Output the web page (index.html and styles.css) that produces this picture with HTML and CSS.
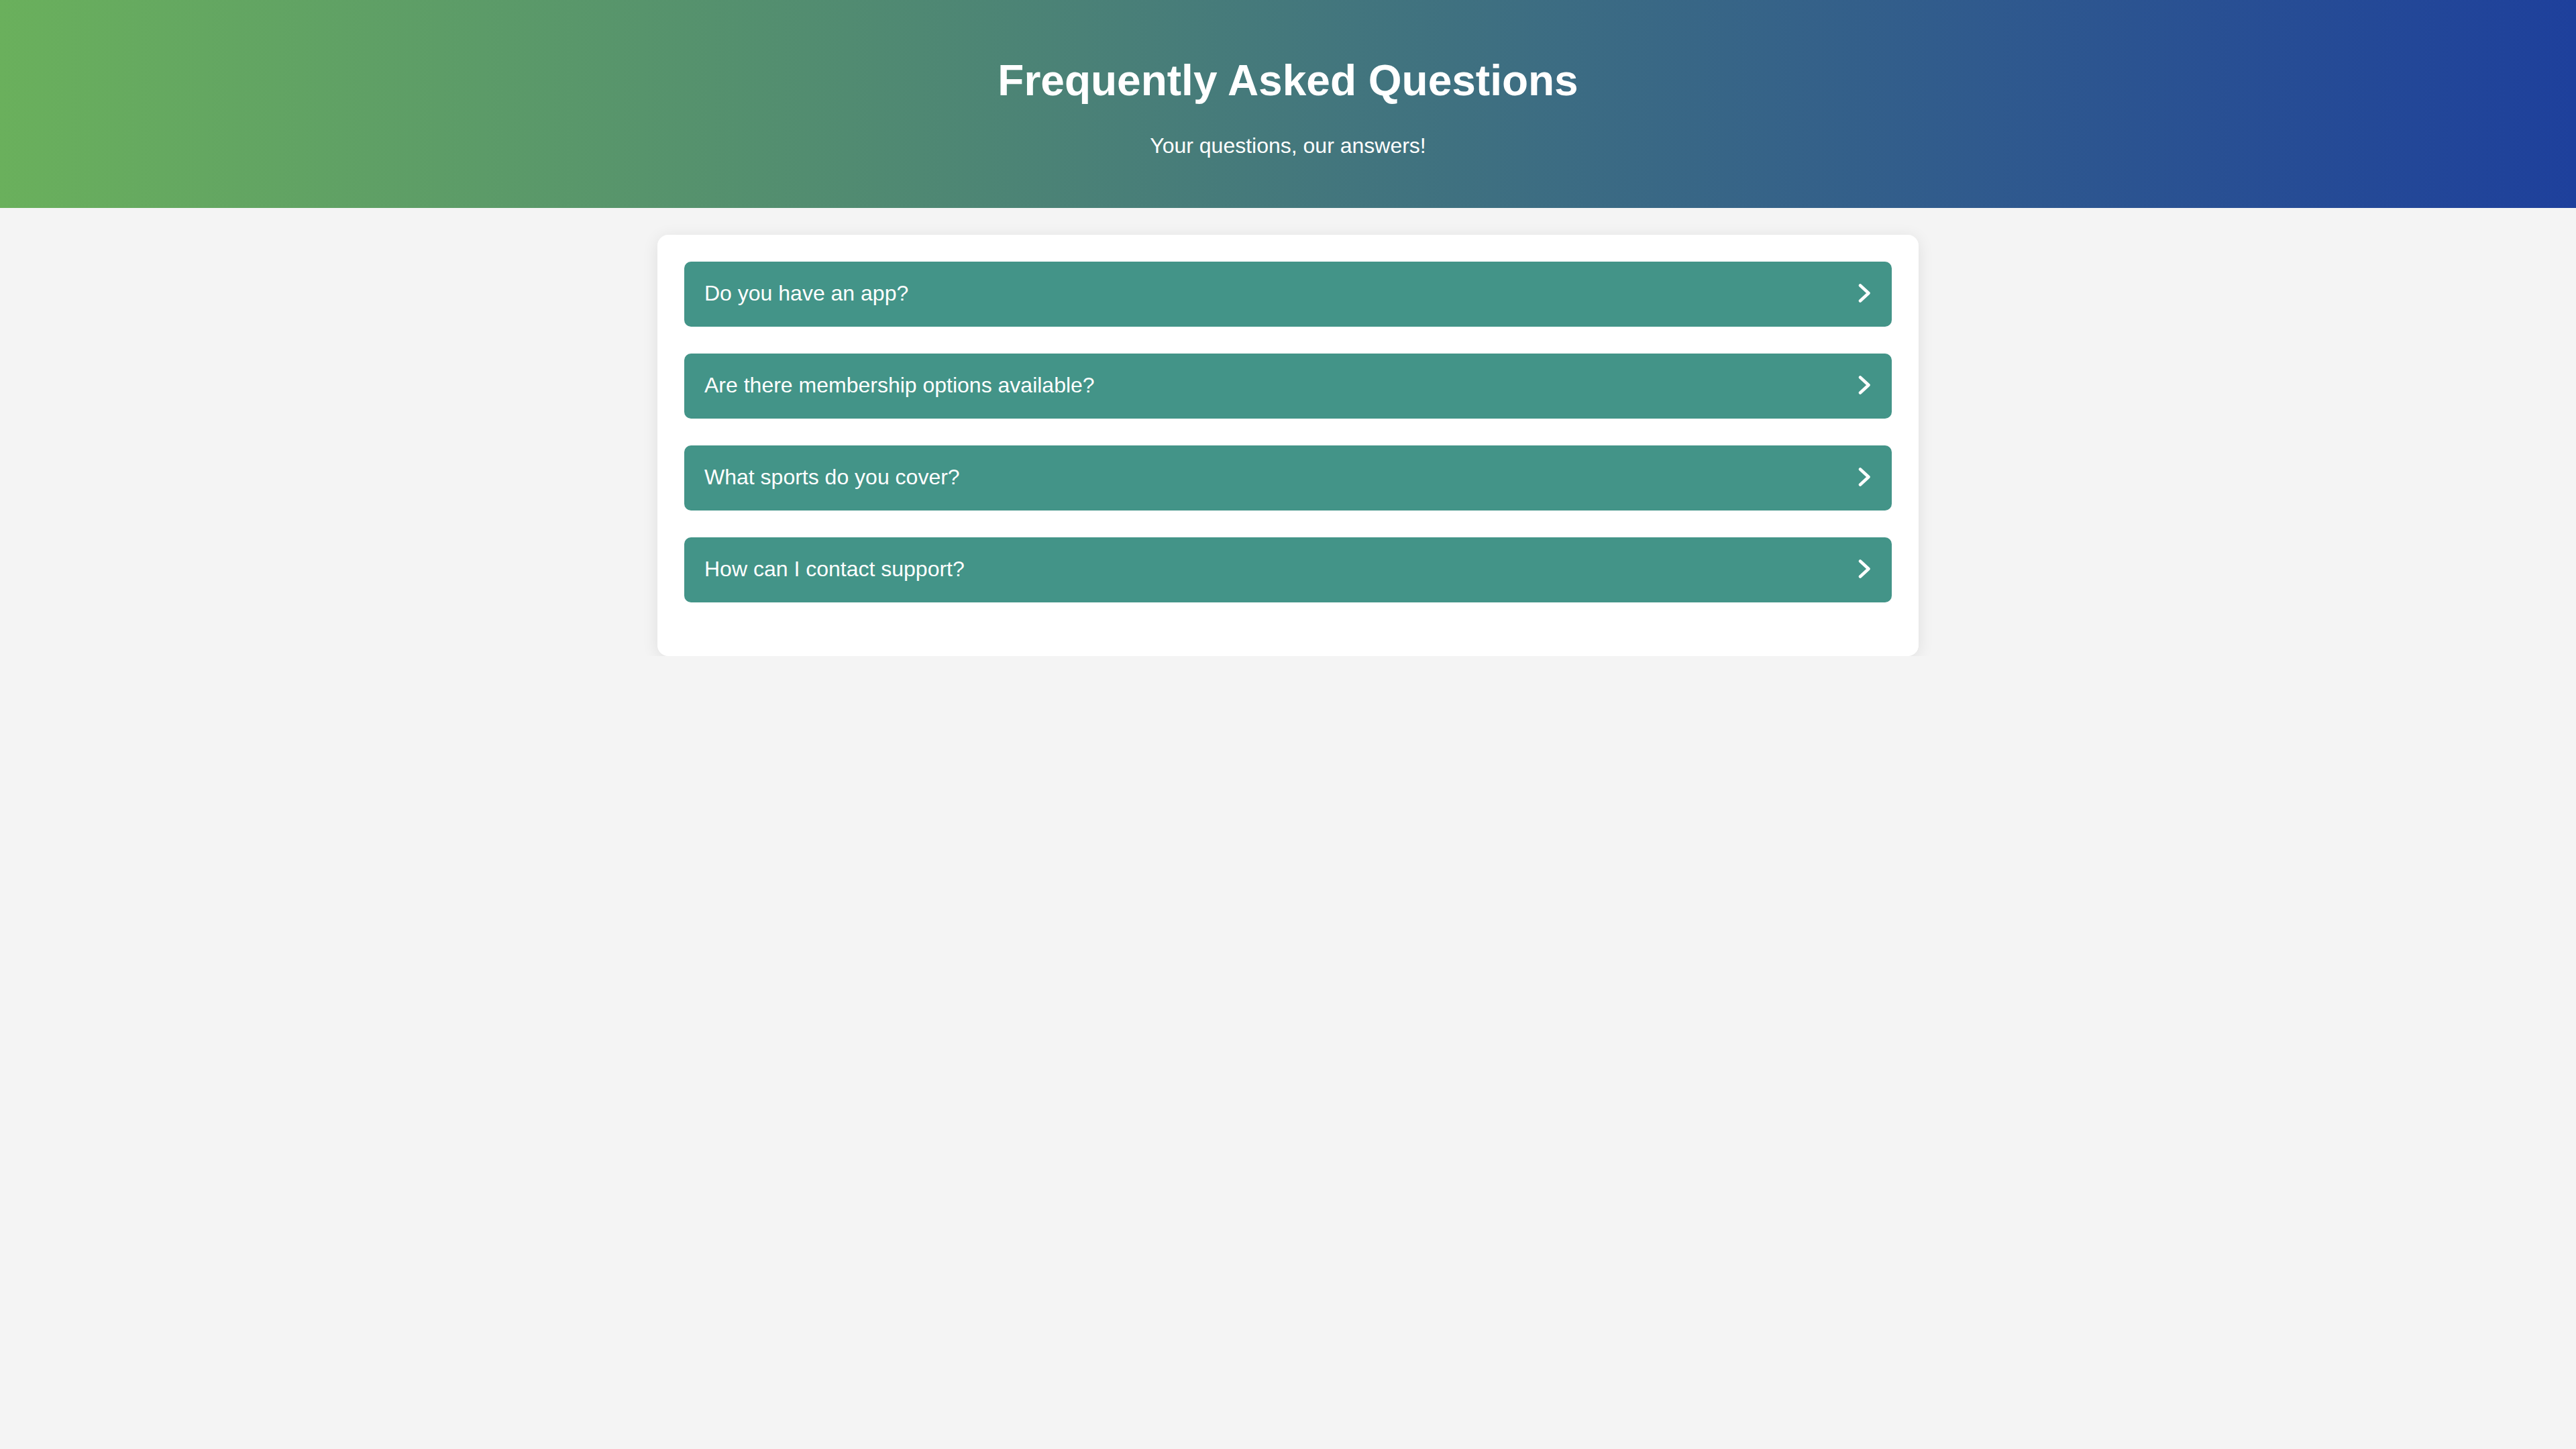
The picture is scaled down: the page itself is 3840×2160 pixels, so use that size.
FILE: index.html
```html
<!DOCTYPE html>
<html lang="en">
<head>
<meta charset="utf-8">
<title>FAQ</title>
<link rel="stylesheet" href="styles.css">
</head>
<body>
<header class="hero">
  <h1 class="hero-title">Frequently Asked Questions</h1>
  <p class="hero-sub">Your questions, our answers!</p>
</header>
<main class="faq">
  <div class="faq-item"><span class="faq-q">Do you have an app?</span><svg class="chev" viewBox="0 0 20 30" width="20" height="30"><polyline points="3,3.5 15.5,15 3,26.5"/></svg></div>
  <div class="faq-item"><span class="faq-q">Are there membership options available?</span><svg class="chev" viewBox="0 0 20 30" width="20" height="30"><polyline points="3,3.5 15.5,15 3,26.5"/></svg></div>
  <div class="faq-item"><span class="faq-q">What sports do you cover?</span><svg class="chev" viewBox="0 0 20 30" width="20" height="30"><polyline points="3,3.5 15.5,15 3,26.5"/></svg></div>
  <div class="faq-item"><span class="faq-q">How can I contact support?</span><svg class="chev" viewBox="0 0 20 30" width="20" height="30"><polyline points="3,3.5 15.5,15 3,26.5"/></svg></div>
</main>
</body>
</html>
```
FILE: styles.css
```css
html, body {
  margin: 0;
  padding: 0;
}
body {
  background: #f4f4f4;
  font-family: "Liberation Sans", Arial, sans-serif;
  color: #ffffff;
}
.hero {
  background: linear-gradient(to right, #6ab05c, #1e409c);
  text-align: center;
  padding: 83px 20px 74px;
}
.hero-title {
  margin: 0 0 41.5px;
  font-size: 64px;
  font-weight: 700;
  line-height: normal;
}
.hero-sub {
  margin: 0;
  font-size: 32px;
  line-height: normal;
}
.faq {
  width: 1880px;
  box-sizing: border-box;
  margin: 40px auto 0;
  padding: 40px;
  background: #ffffff;
  border-radius: 16px;
  box-shadow: 0 4px 24px rgba(0, 0, 0, 0.09);
  overflow: hidden;
}
.faq-item {
  display: flex;
  align-items: center;
  justify-content: space-between;
  background: #439488;
  border-radius: 10px;
  padding: 29px 30px 31px;
  margin-bottom: 40px;
  font-size: 32px;
  line-height: normal;
}
.chev {
  display: block;
  flex: none;
  fill: none;
  stroke: #ffffff;
  stroke-width: 4.5;
  stroke-linecap: round;
  stroke-linejoin: round;
}
```
